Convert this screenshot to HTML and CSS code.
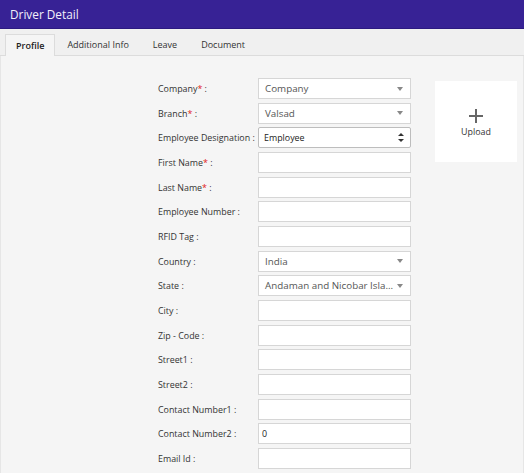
FILE: index.html
```html
<!DOCTYPE html>
<html lang="en">

<head>
    <meta charset="UTF-8">
    <title>Driver Detail</title>
    <link rel="stylesheet" href="styles.css">
</head>

<body>
    <div class="header">Driver Detail</div>
    <div class="tabs">
        <div class="tab active">Profile</div>
        <div class="tab">Additional Info</div>
        <div class="tab">Leave</div>
        <div class="tab">Document</div>
    </div>
    <div class="content">
        <div class="form">
            <label>Company<span class="req">*</span> :</label>
            <div class="field select"><span>Company</span><i class="caret"></i></div>
            <label>Branch<span class="req">*</span> :</label>
            <div class="field select"><span>Valsad</span><i class="caret"></i></div>
            <label>Employee Designation :</label>
            <div class="field native"><span>Employee</span><i class="updown"></i></div>
            <label>First Name<span class="req">*</span> :</label>
            <div class="field"></div>
            <label>Last Name<span class="req">*</span> :</label>
            <div class="field"></div>
            <label>Employee Number :</label>
            <div class="field"></div>
            <label>RFID Tag :</label>
            <div class="field"></div>
            <label>Country :</label>
            <div class="field select"><span>India</span><i class="caret"></i></div>
            <label>State :</label>
            <div class="field select"><span>Andaman and Nicobar Isla...</span><i class="caret"></i></div>
            <label>City :</label>
            <div class="field"></div>
            <label>Zip - Code :</label>
            <div class="field"></div>
            <label>Street1 :</label>
            <div class="field"></div>
            <label>Street2 :</label>
            <div class="field"></div>
            <label>Contact Number1 :</label>
            <div class="field"></div>
            <label>Contact Number2 :</label>
            <div class="field text">0</div>
            <label>Email Id :</label>
            <div class="field"></div>
        </div>
        <div class="upload">
            <svg width="16" height="16" viewBox="0 0 16 16">
                <path d="M8 1v14M1 8h14" stroke="#666" stroke-width="2" fill="none" />
            </svg>
            <div class="upload-text">Upload</div>
        </div>
    </div>
</body>

</html>
```

FILE: styles.css
```css
* {
    box-sizing: border-box;
}

body {
    margin: 0;
    font-family: 'Open Sans', sans-serif;
    background-color: #f5f5f5;
    color: #333;
}

.header {
    height: 29px;
    background-color: #372295;
    border-bottom: 1px solid #2c1a80;
    color: #f2f0fa;
    font-size: 11.8px;
    line-height: 28px;
    padding-left: 10px;
}

.tabs {
    display: flex;
    align-items: flex-end;
    height: 27px;
    background-color: #f0f0f0;
    border-bottom: 1px solid #dcdcdc;
    padding-left: 5px;
}

.tab {
    height: 21px;
    line-height: 21px;
    font-size: 9px;
    padding: 0 12px;
    color: #333;
}

.tab.active {
    background-color: #f5f5f5;
    border: 1px solid #dcdcdc;
    border-bottom: none;
    margin-bottom: -1px;
    height: 22px;
    padding: 0 10px;
    font-weight: 600;
    color: #222;
}

.content {
    display: flex;
    align-items: flex-start;
    height: 418px;
    border-left: 1px solid #e6e6e6;
    border-right: 1px solid #e6e6e6;
    padding-top: 22px;
    padding-left: 157px;
}

.form {
    display: grid;
    grid-template-columns: 100px 153px;
    grid-auto-rows: 21px;
    row-gap: 3.67px;
    align-items: center;
}

label {
    font-size: 8.9px;
    color: #333;
}

.req {
    color: #e02020;
}

.field {
    height: 21px;
    background-color: #fff;
    border: 1px solid #d6d6d6;
    display: flex;
    align-items: center;
    font-size: 9.8px;
    color: #444;
}

.field.select {
    padding: 0 7px 0 6px;
    justify-content: space-between;
    color: #555;
}

.field.native {
    padding: 0 6px 0 5px;
    justify-content: space-between;
    color: #222;
    border-color: #bdbdbd;
    border-radius: 2px;
    font-size: 8.9px;
}

.field.text {
    padding-left: 3px;
    font-size: 8.9px;
    color: #222;
}

.caret {
    width: 0;
    height: 0;
    border-left: 3px solid transparent;
    border-right: 3px solid transparent;
    border-top: 4px solid #888;
}

.updown {
    position: relative;
    width: 6px;
    height: 9px;
}

.updown::before,
.updown::after {
    content: "";
    position: absolute;
    left: 0;
    border-left: 3px solid transparent;
    border-right: 3px solid transparent;
}

.updown::before {
    top: 0;
    border-bottom: 3.5px solid #333;
}

.updown::after {
    bottom: 0;
    border-top: 3.5px solid #333;
}

.upload {
    margin-left: 24px;
    margin-top: 3px;
    width: 82px;
    height: 81px;
    background-color: #fff;
    display: flex;
    flex-direction: column;
    align-items: center;
    justify-content: center;
    padding-top: 2px;
}

.upload-text {
    font-size: 8.9px;
    color: #333;
    margin-top: 1px;
}
```
